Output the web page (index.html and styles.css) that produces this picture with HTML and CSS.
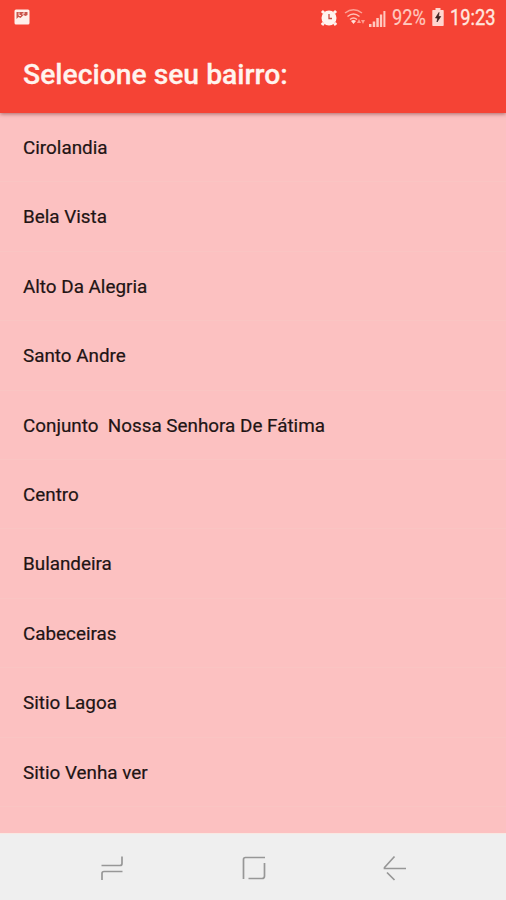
FILE: index.html
```html
<!DOCTYPE html>
<html lang="pt-BR">
<head>
<meta charset="utf-8">
<title>Selecione seu bairro</title>
<link rel="stylesheet" href="styles.css">
</head>
<body>
<div class="screen">
  <header class="top">
    <div class="status">
      <svg class="photo" width="16" height="16" viewBox="0 0 16 16"><rect x=".5" y=".5" width="15" height="15" rx="1.500" fill="#fff0eb"/><path d="M2.500 3h11v3l-2 1-2-1-3 3-2-1-2 2z" fill="#c9564c"/><path d="M5 3.500v3h2M9 6V4h2" stroke="#ffe0da" fill="none"/></svg>
      <div class="right">
        <svg class="alarm" width="18" height="18" viewBox="0 0 18 18"><path d="M2 4l2-2M16 4l-2-2M3.500 14L2 16M14.500 14l1.500 2" stroke="#fff4ef" stroke-width="3" fill="none"/><circle cx="9" cy="9" r="7.500" fill="#fff4ef"/><path d="M9 5v4.500h3" stroke="#c84d43" stroke-width="1.300" fill="none"/></svg>
        <svg class="wifi" width="22" height="18" viewBox="0 0 22 18"><g fill="none" stroke="#ffc1b6" stroke-width="1.500"><path d="M1 5Q9.500-1.500 18 5" opacity=".75"/><path d="M3.500 8.500Q9.500 3.500 15.500 8.500"/><path d="M6 11.500Q9.500 8.500 13 11.500"/></g><path d="M7 13Q9.500 11 12 13L9.500 16z" fill="#ffe0d8"/><path d="M13 15l2-4 2 4zM17 12l2 4 2-4z" fill="#ff9c8f"/></svg>
        <svg class="signal" width="17" height="17" viewBox="0 0 17 17" fill="#ffc9bf"><path d="M0 14h2.500v3H0zM3.700 11.500h2.500V17H3.700zM7.300 8h2.500v9H7.300zM10.900 4.500h2.300V17h-2.300zM14.400 1h2v16h-2z"/></svg>
        <span class="percent"><span>92%</span></span>
        <svg class="battery" width="12" height="18" viewBox="0 0 12 18"><path d="M3.500 0h5v2H11q.7 0 .7.700v14.600q0 .7-.7.700H1q-.7 0-.7-.7V2.700Q.3 2 1 2h2.500z" fill="#ffd6d0"/><path d="M7 4.500L3.500 10h2.200L5 14l3.700-5.500H6.500z" fill="#39201f" stroke="#39201f" stroke-width=".7"/></svg>
        <span class="clock"><span>19:23</span></span>
      </div>
    </div>
    <h1>Selecione seu bairro:</h1>
  </header>
  <ul class="list">
    <li>Cirolandia</li>
    <li>Bela Vista</li>
    <li>Alto Da Alegria</li>
    <li>Santo Andre</li>
    <li>Conjunto&nbsp; Nossa Senhora De Fátima</li>
    <li>Centro</li>
    <li>Bulandeira</li>
    <li>Cabeceiras</li>
    <li>Sitio Lagoa</li>
    <li>Sitio Venha ver</li>
  </ul>
  <nav class="nav">
    <svg width="24" height="26" viewBox="0 0 24 26"><path d="M1.500 10.500H20q2 0 2-2V1.500M22.500 16.500H4q-2 0-2 2V25"/></svg>
    <svg width="24" height="24" viewBox="0 0 24 24"><path d="M23 1.500H3.500q-2 0-2 2V23M6.500 22.500H20q2.500 0 2.500-2.500V7"/></svg>
    <svg width="24" height="26" viewBox="0 0 24 26"><path d="M11.500 1.500L1.500 12.500V13.500H23M4 17.500l7.500 7.500"/></svg>
  </nav>
</div>
</body>
</html>
```

FILE: styles.css
```css
* { box-sizing: border-box; }
body { margin: 0; font-family: Roboto, sans-serif; }
.screen { width: 506px; height: 900px; display: flex; flex-direction: column; background: #fcc1c1; }
.top {
  height: 113px;
  flex: none;
  background: #f54335;
  color: #fff4ee;
  box-shadow: 0 1px 4px rgba(90, 20, 20, .5);
}
.status { height: 36px; padding: 0 11px 0 14px; display: flex; justify-content: space-between; align-items: center; }
.right { display: flex; align-items: center; }
.photo { margin-bottom: 2px; }
.wifi { margin-left: 6px; margin-bottom: 2px; }
.signal { margin-left: 3px; }
.percent, .clock { display: block; font-size: 21.5px; line-height: 24px; white-space: nowrap; }
.percent { width: 35px; margin-left: 6px; color: #ffc9bf; -webkit-text-stroke: .2px #ffc9bf; }
.clock { width: 45px; margin-left: 6px; color: #ffe6df; -webkit-text-stroke: .4px #ffe6df; }
.percent span, .clock span { display: inline-block; transform-origin: left; transform: scaleX(.85); }
.battery { margin-left: 5px; margin-bottom: 2px; }
h1 { margin: 0; padding: 23px 23px 0; font-size: 28.3px; line-height: 32px; font-weight: 500; -webkit-text-stroke: .3px #fff4ee; }
.list { list-style: none; margin: 0; padding: 0; height: 720px; flex: none; }
.list li {
  height: 69.4px;
  padding: 1px 0 0 23px;
  font-size: 18.85px;
  line-height: 69.4px;
  color: #211414;
  -webkit-text-stroke: .2px #211414;
  border-bottom: 1px solid #fac5c3;
}
.nav {
  flex: 1;
  display: flex;
  justify-content: space-between;
  align-items: center;
  padding: 2px 99px 0 100px;
  background: #efefef;
  border-top: 1px solid #f8e9e3;
}
.nav svg { fill: none; stroke: #979797; stroke-width: 1.700; }
```
